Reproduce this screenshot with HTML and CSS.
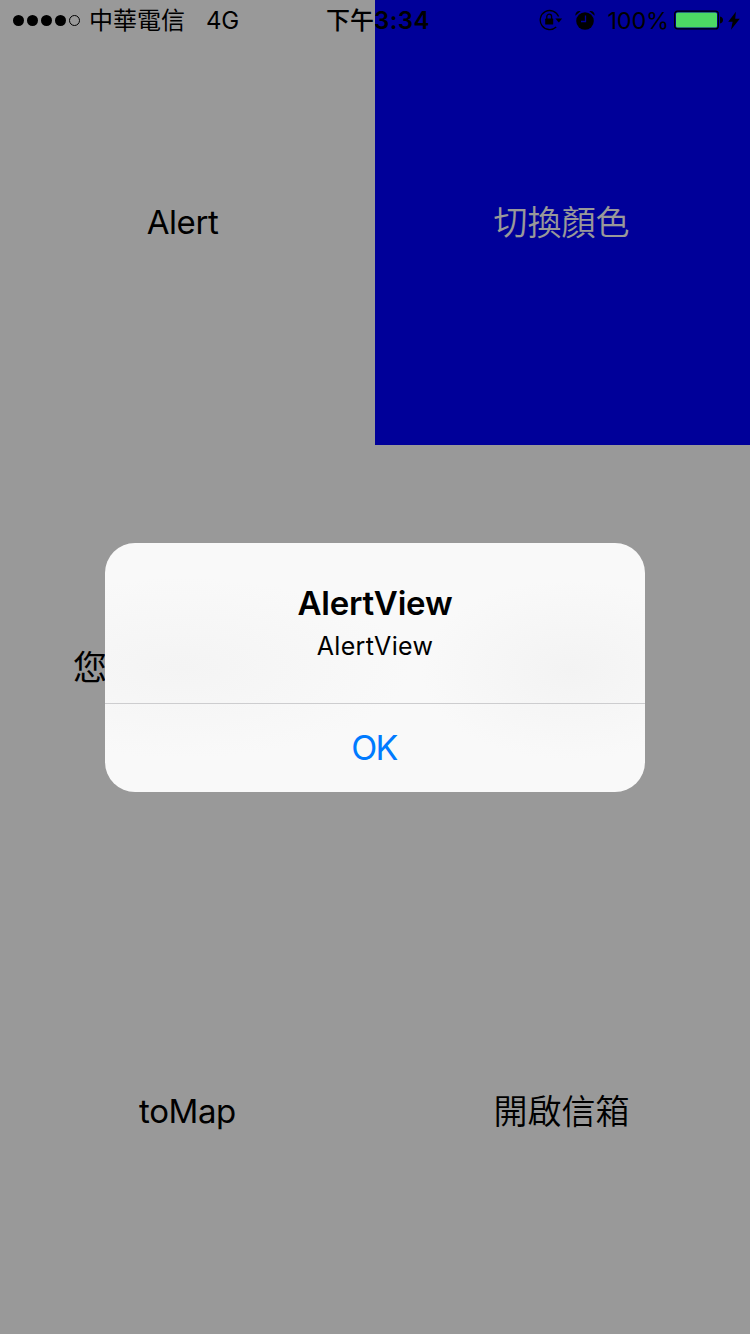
FILE: index.html
```html
<!DOCTYPE html>
<html lang="zh-Hant">
<head>
<meta charset="utf-8">
<title>AlertView</title>
<link rel="stylesheet" href="styles.css">
</head>
<body>
<main class="screen">
  <section class="tiles">
    <div class="tile"><span class="label label-alert">Alert</span></div>
    <div class="tile tile-blue"><span class="label label-cjk">切換顏色</span></div>
    <div class="tile tile-start"><span class="label">您</span></div>
    <div class="tile"></div>
    <div class="tile"><span class="label label-map">toMap</span></div>
    <div class="tile"><span class="label label-cjk">開啟信箱</span></div>
  </section>

  <div class="overlay">
    <div class="dialog" role="alertdialog">
      <div class="dialog-body">
        <h1 class="dialog-title">AlertView</h1>
        <p class="dialog-message">AlertView</p>
      </div>
      <button class="dialog-action"><span class="ok">OK</span></button>
    </div>
  </div>

  <header class="status">
    <div class="status-left">
      <svg class="signal" width="68" height="12" viewBox="0 0 68 12">
        <circle cx="5.5" cy="6.5" r="5.5"/><circle cx="19.5" cy="6.5" r="5.5"/><circle cx="33.5" cy="6.5" r="5.5"/><circle cx="47.5" cy="6.5" r="5.5"/>
        <circle cx="61.5" cy="6.5" r="5" fill="none" stroke="#000" stroke-width="1"/>
      </svg>
      <span class="carrier">中華電信</span>
      <span class="network">4G</span>
    </div>
    <div class="status-time"><span class="ampm">下午</span><span class="clock">3:34</span></div>
    <div class="status-right">
      <svg class="lock" width="24" height="22" viewBox="0 0 24 22">
        <path d="M19.6 7.6A9.5 9.5 0 1 0 17.2 18" fill="none" stroke="#000" stroke-width="1.3"/>
        <path d="M16.4 9.6h6.8l-3.4 3.9z"/>
        <rect x="6.2" y="9.6" width="8" height="6" rx=".6"/>
        <path d="M7.8 10V7.6a2.4 2.4 0 0 1 4.8 0V10" fill="none" stroke="#000" stroke-width="1.3"/>
      </svg>
      <svg class="alarm" width="20" height="20" viewBox="0 0 20 20">
        <circle cx="10" cy="11" r="8.8"/>
        <path d="M.3 5.8C.2 2.5 2.5.6 5.6 1.2z"/>
        <path d="M19.7 5.8C19.8 2.5 17.5.6 14.4 1.2z"/>
        <path d="M10.5 5.5v6H6" fill="none" stroke="#009" stroke-width="1.3"/>
      </svg>
      <span class="percent">100%</span>
      <svg class="battery" width="50" height="20" viewBox="0 0 50 20">
        <rect x=".6" y="1.1" width="43.8" height="17.8" rx="3" fill="none" stroke="#000" stroke-width="1.2"/>
        <rect x="2" y="2.5" width="41" height="15" rx="1.6" fill="#4cd964"/>
        <path d="M46 6.5c4 .6 4 6.4 0 7z"/>
      </svg>
      <svg class="bolt" width="12" height="19" viewBox="0 0 12 19">
        <path d="M7.9.8.2 10.8h4.4L3 18.8l8.8-11H7.2z"/>
      </svg>
    </div>
  </header>
</main>
</body>
</html>
```
FILE: styles.css
```css
* { box-sizing: border-box; }

body {
  margin: 0;
  font-family: Inter, "Noto Sans CJK TC", sans-serif;
  color: #000;
}

.screen {
  position: relative;
  width: 750px;
  height: 1334px;
  overflow: hidden;
  background: #fff;
}

.tiles {
  display: grid;
  grid-template-columns: 375px 375px;
  grid-template-rows: 445px 444px 445px;
}

.tile {
  display: flex;
  align-items: center;
  justify-content: center;
  font-size: 34px;
  line-height: 42px;
  white-space: nowrap;
}

.tile-blue { background: #00f; color: #fff; }
.tile-start { justify-content: flex-start; padding: 2px 0 0 73px; }
.label-alert { margin: 0 10px 2px 0; font-size: 33px; letter-spacing: -0.4px; }
.label-map { margin-bottom: 2px; font-size: 33px; letter-spacing: -0.4px; }
.label-cjk { margin-right: 2px; font-weight: 350; }

.overlay {
  position: absolute;
  inset: 0;
  display: flex;
  align-items: center;
  justify-content: center;
  background: rgba(0, 0, 0, 0.4);
}

.dialog {
  display: flex;
  flex-direction: column;
  width: 540px;
  height: 249px;
  border-radius: 30px;
  overflow: hidden;
  background:
    radial-gradient(ellipse 230px 90px at 75px 125px, #f4f4f4, rgba(244, 244, 244, 0)),
    radial-gradient(ellipse 150px 90px at 465px 127px, #f3f3f3, rgba(243, 243, 243, 0)),
    #f9f9f9;
}

.dialog-body {
  height: 160px;
  padding-top: 40px;
  text-align: center;
}

.dialog-title {
  margin: 0;
  font-size: 33px;
  font-weight: 600;
  line-height: 40px;
  letter-spacing: -0.2px;
}

.dialog-message {
  margin: 7px 0 0;
  font-size: 25px;
  line-height: 32px;
  letter-spacing: 0.35px;
}

.dialog-action {
  display: flex;
  flex: 1;
  align-items: center;
  justify-content: center;
  padding: 0;
  border: 0;
  border-top: 1px solid #cdcdcf;
  background: transparent;
  color: #007aff;
  font: 400 34px/40px Inter, sans-serif;
}

.ok { margin-right: 2px; letter-spacing: -1.6px; }

.status {
  position: absolute;
  inset: 0 0 auto;
  display: grid;
  grid-template-columns: 300px 150px 300px;
  height: 40px;
  font-size: 24px;
  line-height: 38px;
  white-space: nowrap;
}

.status-left, .status-right, .status-time { display: flex; align-items: center; }
.status-left { padding-left: 13px; }
.carrier { margin: 2px 0 0 8px; }
.network { margin: 2px 0 0 21px; letter-spacing: -0.3px; }
.status-time { justify-content: center; padding: 2px 0 0 6px; font-weight: 600; }
.ampm { font-weight: 500; }
.clock { letter-spacing: 0.5px; }
.status-right { justify-content: flex-end; padding-right: 10px; }
.alarm { margin-left: 12px; }
.percent { margin: 2px 0 0 13px; font-size: 23.5px; letter-spacing: -0.2px; }
.battery { margin-left: 5px; }
.bolt { margin-left: 4px; }
```
